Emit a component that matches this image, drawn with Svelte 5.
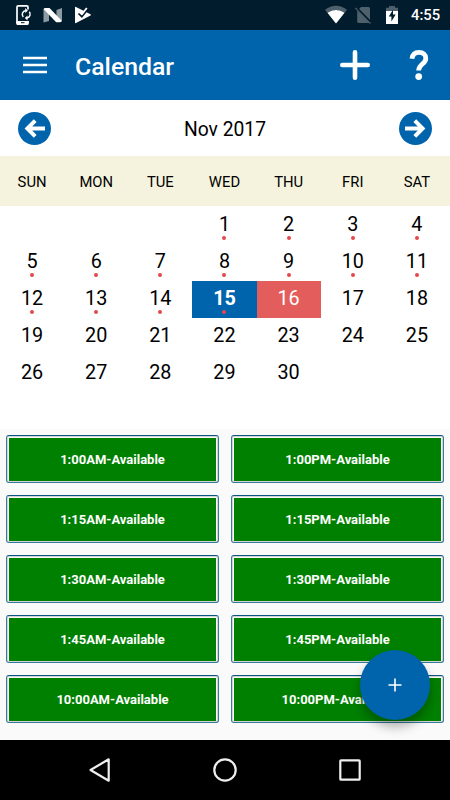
<script>
    const weekdays = ['SUN', 'MON', 'TUE', 'WED', 'THU', 'FRI', 'SAT'];
    const times = ['1:00', '1:15', '1:30', '1:45', '10:00'];

    let month = 'Nov 2017';
    let offset = 3;
    let today = 15;
    let selected = 16;

    // the dotted days have bookings
    const days = Array.from({ length: 30 }, (_, i) => ({
        number: i + 1,
        marked: i + 1 <= 15
    }));
    const blanks = Array.from({ length: offset });
    const slots = times.flatMap((time) => [`${time}AM`, `${time}PM`]);
</script>

<div class="screen">
    <div class="status">
        <svg width="100" height="30" viewBox="0 0 100 30">
            <path d="M28 9.500V7q0-1.200-1.200-1.200h-8.600Q17 5.800 17 7v16q0 1.200 1.200 1.200h8.600Q28 24.200 28 23v-2" fill="none" stroke="#fff" stroke-width="1.700" />
            <path d="M16.500 21h12v2.500q0 1.500-1.500 1.500h-9q-1.500 0-1.500-1.500z" fill="#fff" />
            <path d="M21 22.700h3.500" stroke="#001c2d" stroke-width="1" />
            <path d="M23.300 17a3.900 3.900 0 0 1 2.400-6.500M27 18a3.900 3.900 0 0 0 2.300-6.300" fill="none" stroke="#fff" stroke-width="1.500" />
            <path d="M25.200 8l2.700 2.500-2.700 2.500zM27.500 15.500v5L24.800 18z" fill="#fff" />
            <path d="M43.500 9l5.500 3v9l-5.500 1.500zM62 8v13l-5.500-3V10z" fill="#8d9ba4" />
            <path d="M43.500 9q.500-1 2-1h4L62 21q-1 1.200-2.500 1.200h-3.300z" fill="#fff" />
            <path d="M75 7.500q0-1 1-.500l14.500 7.200q1 .700 0 1.300L76 23q-1 .500-1-.500z" fill="#fff" />
            <path d="M78.500 13.500l3.300 3.200L88 9.200" fill="none" stroke="#001c2d" stroke-width="1.700" />
            <path d="M80.500 12.500l1.500 1.500 4.800-6" fill="none" stroke="#fff" stroke-width="1.800" />
        </svg>
        <svg class="signals" width="80" height="30" viewBox="322 0 80 30">
            <path d="M325 9.800q11-8 22 0L336 23.500z" fill="#4d606c" />
            <path d="M327.500 12.700q8.500-5.500 17 0L336 23.500z" fill="#fff" />
            <path d="M361 7h7.500q1.500 0 1.500 1.500V20L359 9z" fill="#4d606c" />
            <path d="M357.200 10.500L369.700 23h-11q-1.500 0-1.500-1.500z" fill="#4d606c" />
            <path d="M355.500 8l15 15.500" stroke="#4d606c" stroke-width="1.300" />
            <path d="M357.500 8.500l13 13.300" stroke="#001c2d" stroke-width="1.200" />
            <path d="M389 6h6v1.700h3V12h-12V7.700h3z" fill="#4d606c" />
            <path d="M386 11h12v13h-12z" fill="#fff" />
            <path d="M393 9.800l-4.200 6.700h2.600v5l4.300-7H393z" fill="#001c2d" />
        </svg>
        <span class="clock">4:55</span>
    </div>

    <header>
        <button class="icon menu" aria-label="Menu">
            <svg width="24" height="18" viewBox="0 0 24 18">
                <path d="M0 2h24M0 9h24M0 16h24" stroke="#fff" stroke-width="2.600" />
            </svg>
        </button>
        <h1>Calendar</h1>
        <button class="icon add" aria-label="Add">
            <svg width="30" height="30" viewBox="0 0 30 30">
                <path d="M15 2.300v25.400M2.300 15h25.400" stroke="#fff" stroke-width="4.600" stroke-linecap="round" />
            </svg>
        </button>
        <button class="icon" aria-label="Help">
            <svg width="20" height="30" viewBox="0 0 20 30">
                <path d="M3 8.800C3.400 4.800 6 2.400 10 2.400c4.200 0 6.800 2.400 6.800 6 0 5.600-7.200 5.800-7.200 12.200" fill="none" stroke="#fff" stroke-width="4.800" />
                <circle cx="9.700" cy="26.600" r="3.400" fill="#fff" />
            </svg>
        </button>
    </header>

    <div class="month">
        <button class="icon" aria-label="Previous month">
            <svg width="33" height="33" viewBox="0 0 33 33">
                <circle cx="16.500" cy="16.500" r="16.500" fill="#0064ac" />
                <path d="M27 16.500H10M17.200 8.700l-7.800 7.800 7.800 7.800" fill="none" stroke="#fff" stroke-width="4" />
            </svg>
        </button>
        <span class="month-name">{month}</span>
        <button class="icon" aria-label="Next month">
            <svg width="33" height="33" viewBox="0 0 33 33">
                <circle cx="16.500" cy="16.500" r="16.500" fill="#0064ac" />
                <path d="M6 16.500h17M15.800 8.700l7.800 7.800-7.800 7.800" fill="none" stroke="#fff" stroke-width="4" />
            </svg>
        </button>
    </div>

    <div class="weekdays">
        {#each weekdays as weekday}
            <span>{weekday}</span>
        {/each}
    </div>

    <div class="days">
        {#each blanks as _}
            <span></span>
        {/each}
        {#each days as day}
            <div class="day" class:today={day.number === today} class:selected={day.number === selected}>
                {day.number}
                {#if day.marked}
                    <i class="dot"></i>
                {/if}
            </div>
        {/each}
    </div>

    <div class="slots">
        {#each slots as slot}
            <button class="slot">{slot}-Available</button>
        {/each}
        <button class="fab" aria-label="New booking">
            <svg width="14" height="14" viewBox="0 0 14 14">
                <path d="M7 .500v13M.500 7h13" stroke="#fff" stroke-width="1.600" />
            </svg>
        </button>
    </div>

    <nav>
        <svg width="24" height="26" viewBox="0 0 24 26">
            <path d="M20.700 2.300v21.400L2.500 13z" fill="none" stroke="#eee" stroke-width="2.200" stroke-linejoin="round" />
        </svg>
        <svg width="24" height="24" viewBox="0 0 24 24">
            <circle cx="12" cy="12" r="10.700" fill="none" stroke="#eee" stroke-width="2.200" />
        </svg>
        <svg width="24" height="24" viewBox="0 0 24 24">
            <rect x="2.300" y="2.300" width="19.400" height="19.400" rx=".8" fill="none" stroke="#eee" stroke-width="2.200" />
        </svg>
    </nav>
</div>

<style>
    :global(body) {
        margin: 0;
    }

    .screen {
        display: flex;
        flex-direction: column;
        width: 450px;
        height: 800px;
        overflow: hidden;
        background: #fff;
        color: #000;
        font-family: Roboto, sans-serif;
    }

    svg {
        display: block;
    }

    button {
        border: none;
        padding: 0;
        font-family: inherit;
    }

    .icon {
        background: none;
    }

    .status {
        display: flex;
        align-items: center;
        height: 30px;
        flex: none;
        box-sizing: border-box;
        padding-right: 9px;
        background: #001c2d;
        color: #fff;
    }

    .signals {
        margin-left: auto;
        margin-right: 9px;
    }

    .clock {
        width: 30px;
        font-size: 14.8px;
        font-weight: 500;
        line-height: 30px;
        white-space: nowrap;
    }

    header {
        display: flex;
        align-items: center;
        height: 70px;
        flex: none;
        box-sizing: border-box;
        padding: 0 21px 0 23px;
        background: #0064ac;
        color: #fff;
    }

    .menu {
        padding-bottom: 1px;
    }

    h1 {
        flex: 1;
        margin: 2px 0 0 28px;
        font-size: 24.8px;
        font-weight: 500;
    }

    .add {
        margin-right: 39px;
    }

    .month {
        display: flex;
        justify-content: space-between;
        align-items: center;
        height: 56px;
        flex: none;
        padding: 0 18px;
        font-size: 19.3px;
    }

    .month-name {
        padding-top: 2px;
    }

    .weekdays, .days {
        display: grid;
        grid-template-columns: repeat(7, 64.15px);
        text-align: center;
    }

    .weekdays {
        height: 50px;
        flex: none;
        background: #f5f3dd;
        font-size: 14.8px;
        line-height: 52px;
    }

    .days {
        height: 223px;
        flex: none;
        box-sizing: border-box;
        padding-top: 1px;
        grid-auto-rows: 37px;
        align-content: start;
    }

    .day {
        position: relative;
        font-size: 19.8px;
        line-height: 35px;
    }

    .today {
        background: #0064ac;
        color: #fff;
        font-weight: 700;
    }

    .selected {
        background: #e45d5d;
        color: #fff;
    }

    .dot {
        position: absolute;
        left: calc(50% - 2px);
        bottom: 4px;
        width: 4px;
        height: 4px;
        border-radius: 50%;
        background: #e5484a;
    }

    .slots {
        position: relative;
        display: grid;
        grid-template-columns: 1fr 1fr;
        grid-auto-rows: 48px;
        gap: 12px 12px;
        height: 311px;
        flex: none;
        box-sizing: border-box;
        padding: 6px 6px 0;
        background: #fafafa;
    }

    .slot {
        border: 1px solid #35799b;
        border-top-color: #0b5583;
        border-radius: 3px;
        padding: 2px 2px 1px;
        background: #008000 content-box;
        box-shadow: inset 0 0 0 1px #d5d5d5;
        color: #fff;
        font-size: 13px;
        font-weight: 700;
    }

    .fab {
        position: absolute;
        right: 20px;
        bottom: 20px;
        display: flex;
        justify-content: center;
        align-items: center;
        width: 70px;
        height: 70px;
        border-radius: 50%;
        background: #0064ac;
        box-shadow: 0 7px 11px rgba(0, 0, 0, 0.3);
    }

    nav {
        display: flex;
        justify-content: center;
        align-items: center;
        gap: 101px;
        height: 60px;
        background: #000;
    }
</style>
